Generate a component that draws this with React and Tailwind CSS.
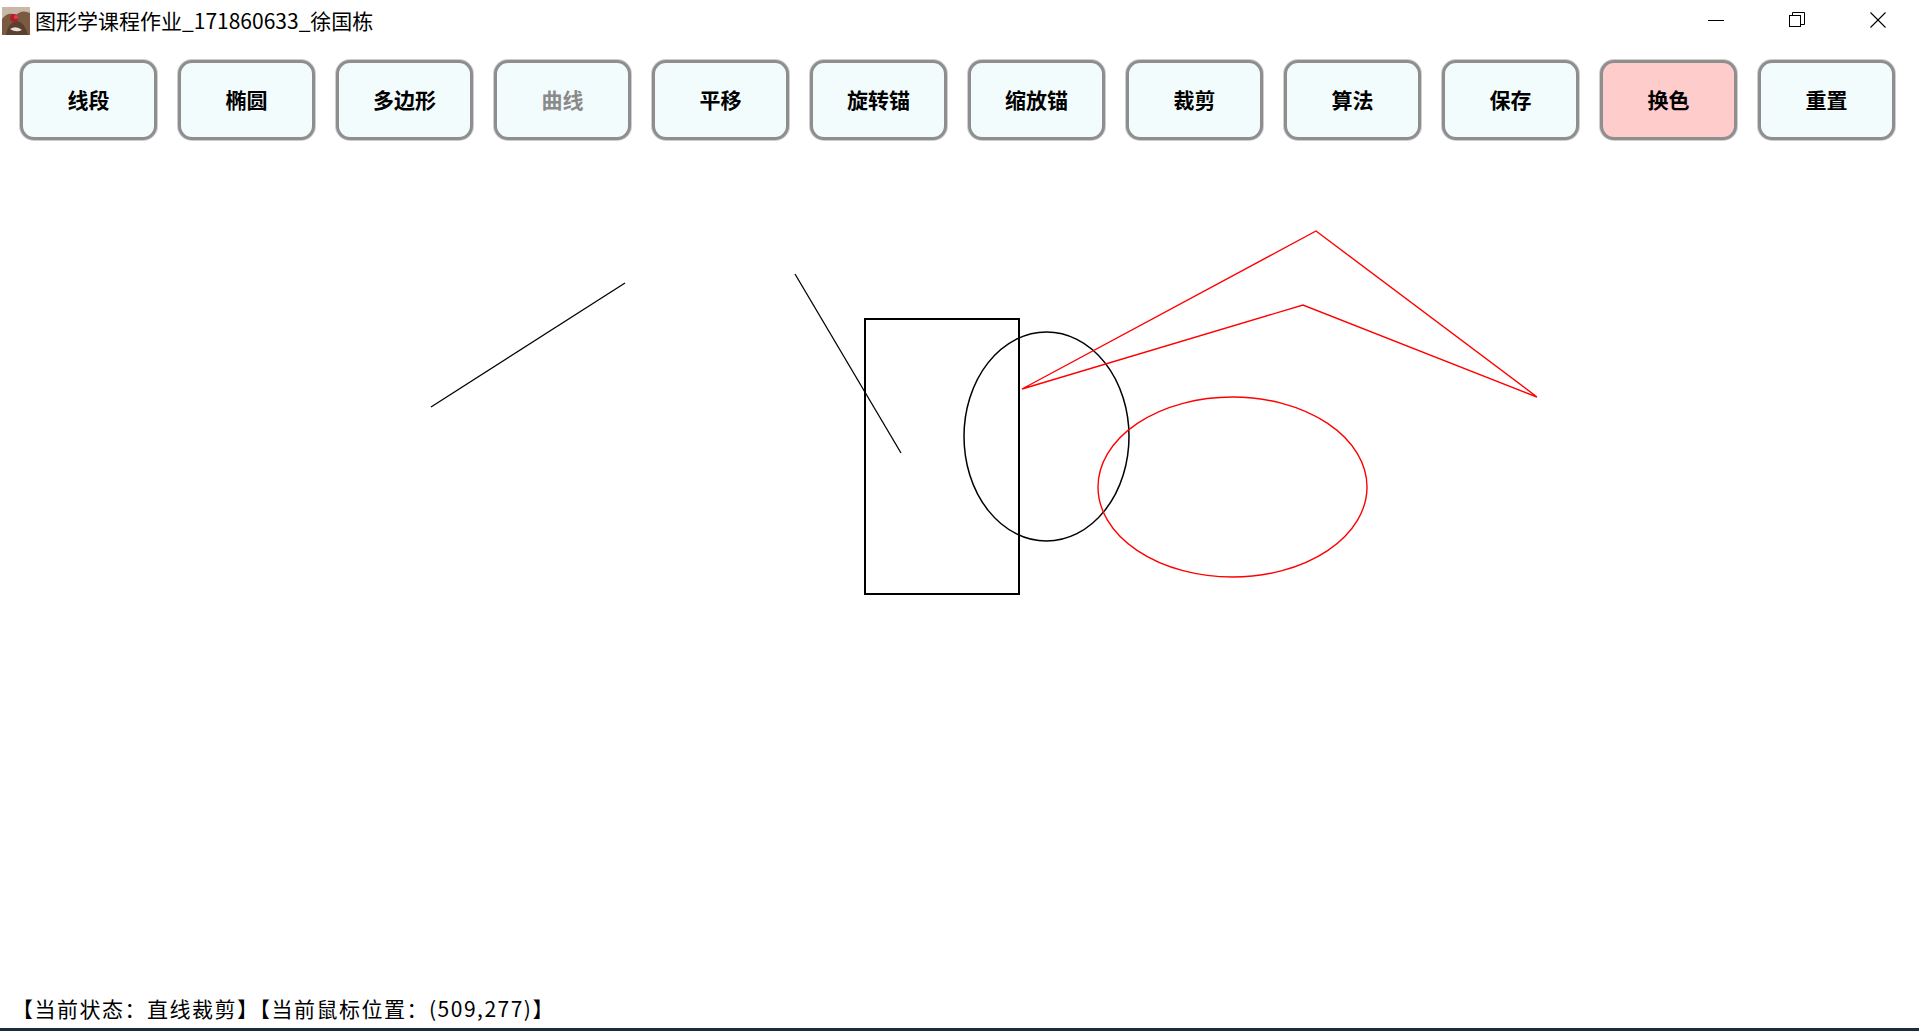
import React from 'react';

const tools = [
  { label: '线段' },
  { label: '椭圆' },
  { label: '多边形' },
  { label: '曲线', disabled: true },
  { label: '平移' },
  { label: '旋转锚' },
  { label: '缩放锚' },
  { label: '裁剪' },
  { label: '算法' },
  { label: '保存' },
  { label: '换色', active: true },
  { label: '重置' },
];

const font = { fontFamily: '"Noto Sans CJK SC", "Noto Sans", sans-serif' };

function AppIcon() {
  return (
    <svg width="28" height="28" viewBox="0 0 28 28">
      <rect width="28" height="28" fill="#c9b8a8" />
      <path d="M0 28 L0 12 Q6 4 14 8 Q20 2 28 6 L28 28 Z" fill="#7a5a40" />
      <path d="M4 28 Q6 16 14 14 Q22 14 26 28 Z" fill="#5b4030" />
      <circle cx="12" cy="11" r="4" fill="#b0202a" />
      <circle cx="14" cy="10" r="2" fill="#e04050" />
      <path d="M8 22 Q14 18 20 23 Q14 26 8 22 Z" fill="#e8e0d8" />
    </svg>
  );
}

function TitleBar() {
  return (
    <div className="h-[40px] flex items-center justify-between bg-white">
      <div className="flex items-center">
        <div className="ml-[2px] mt-[2px]">
          <AppIcon />
        </div>
        <span className="ml-[5px] text-[21px] leading-none text-black" style={font}>
          图形学课程作业_171860633_徐国栋
        </span>
      </div>
      <div className="flex items-center h-full">
        <div className="w-[81px] h-full flex items-center justify-center">
          <svg width="16" height="16" viewBox="0 0 16 16">
            <line x1="0" y1="8.5" x2="16" y2="8.5" stroke="#000" strokeWidth="1" />
          </svg>
        </div>
        <div className="w-[81px] h-full flex items-center justify-center">
          <svg width="16" height="16" viewBox="0 0 16 16" fill="none" stroke="#000" strokeWidth="1">
            <rect x="0.5" y="3.5" width="11" height="11" />
            <path d="M3.5 3.5 V0.5 H15.5 V12.5 H11.5" />
          </svg>
        </div>
        <div className="w-[81px] h-full flex items-center justify-center mr-[1px]">
          <svg width="16" height="16" viewBox="0 0 16 16" stroke="#000" strokeWidth="1.1">
            <line x1="0.5" y1="0.5" x2="15.5" y2="15.5" />
            <line x1="15.5" y1="0.5" x2="0.5" y2="15.5" />
          </svg>
        </div>
      </div>
    </div>
  );
}

function Toolbar() {
  return (
    <div className="flex gap-[21px] px-[20px] pt-[20px]">
      {tools.map((t) => (
        <button
          key={t.label}
          className={
            'w-[137px] h-[80px] rounded-[14px] border-[3px] border-[#8e8e8e] shadow-[0_0_0_1px_#cfcfcf] flex items-center justify-center text-[21px] font-bold ' +
            (t.active ? 'bg-[#ffcccc] ' : 'bg-[#f2fcfd] ') +
            (t.disabled ? 'text-[#8a8a8a]' : 'text-black')
          }
          style={font}
        >
          {t.label}
        </button>
      ))}
    </div>
  );
}

function Canvas() {
  return (
    <div className="h-[855px] w-full">
      <svg width="1919" height="855" viewBox="0 140 1919 855" className="block">
        <g fill="none" stroke="#000">
          <line x1="431" y1="407" x2="625" y2="283" strokeWidth="1.3" />
          <line x1="795" y1="274" x2="901" y2="453" strokeWidth="1.3" />
          <rect x="865" y="319" width="154" height="275" strokeWidth="2" />
          <ellipse cx="1046.5" cy="436.5" rx="82.5" ry="104.5" strokeWidth="1.5" />
        </g>
        <g fill="none" stroke="#ff0000" strokeWidth="1.4">
          <polygon points="1022,389 1316,231 1537,397 1303,305" strokeLinejoin="miter" />
          <ellipse cx="1232.5" cy="487" rx="134.5" ry="90" />
        </g>
      </svg>
    </div>
  );
}

function StatusBar() {
  return (
    <div className="h-[33px] flex items-center pl-[12px] pb-[7px] bg-white">
      <span className="text-[21px] tracking-[1.5px] leading-none text-black" style={font}>
        【当前状态：直线裁剪】【当前鼠标位置：(509,277)】
      </span>
    </div>
  );
}

export default function App() {
  return (
    <div className="w-[1919px] h-[1031px] bg-white overflow-hidden flex flex-col">
      <TitleBar />
      <Toolbar />
      <Canvas />
      <StatusBar />
      <div className="h-[3px] w-full bg-[#1f2a3c]" />
    </div>
  );
}
